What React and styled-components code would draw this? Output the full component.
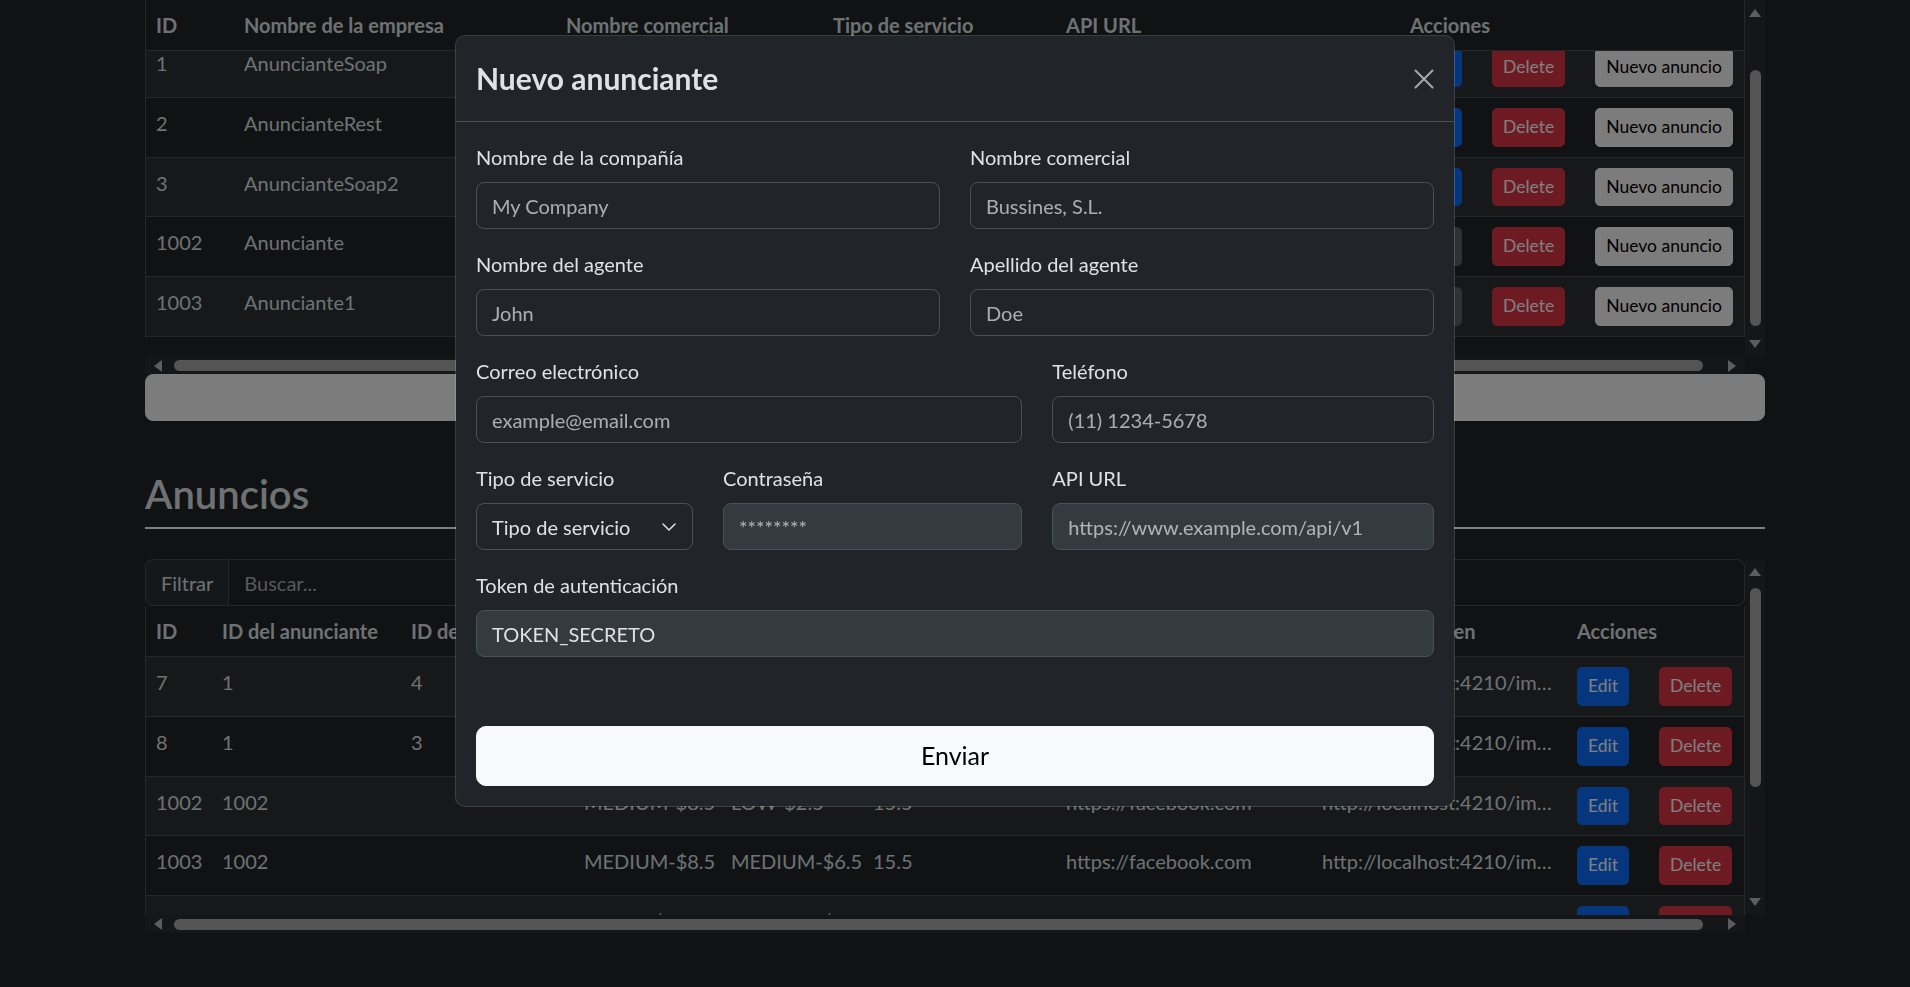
import React, { useLayoutEffect, useRef } from 'react';
import styled, { createGlobalStyle } from 'styled-components';

const GlobalStyle = createGlobalStyle`
  * { box-sizing: border-box; }
  html, body {
    margin: 0;
    padding: 0;
    height: 100%;
    overflow: hidden;
    background: #212529;
  }
  body {
    font-family: Lato, "Open Sans", sans-serif;
    font-size: 20px;
    line-height: 1.5;
    color: #dee2e6;
  }
`;

const Page = styled.div`
  padding: 0 145px;
`;

/* ---------- scroll panels ---------- */

const Panel = styled.div`
  display: grid;
  grid-template-columns: 1fr 20px;
  grid-template-rows: ${p => p.$height}px ${p => p.$bar}px;
`;

const Viewport = styled.div`
  overflow: hidden;
`;

const VScroll = styled.div`
  display: flex;
  flex-direction: column;
  background: #2b2d31;
`;

const HScroll = styled.div`
  display: flex;
  background: #2b2d31;
`;

const ScrollButton = styled.div`
  flex: 0 0 26px;
  display: flex;
  align-items: center;
  justify-content: center;
`;

const Arrow = styled.span`
  width: 0;
  height: 0;
  ${p => p.$dir === 'up' && 'border-left: 6px solid transparent; border-right: 6px solid transparent; border-bottom: 8px solid #bababa;'}
  ${p => p.$dir === 'down' && 'border-left: 6px solid transparent; border-right: 6px solid transparent; border-top: 8px solid #bababa;'}
  ${p => p.$dir === 'left' && 'border-top: 6px solid transparent; border-bottom: 6px solid transparent; border-right: 8px solid #bababa;'}
  ${p => p.$dir === 'right' && 'border-top: 6px solid transparent; border-bottom: 6px solid transparent; border-left: 8px solid #bababa;'}
`;

const VTrack = styled.div`
  flex: 1;
  display: flex;
  flex-direction: column;
  align-items: center;
`;

const VThumb = styled.div`
  width: 11px;
  height: ${p => p.$size}px;
  margin-top: ${p => p.$offset}px;
  border-radius: 6px;
  background: #a8a8a8;
`;

const HTrack = styled.div`
  flex: 1;
  display: flex;
  align-items: center;
`;

const HThumb = styled.div`
  height: 11px;
  width: ${p => p.$size}px;
  margin-left: ${p => p.$offset}px;
  border-radius: 6px;
  background: #a8a8a8;
`;

function VerticalBar({ offset, size }) {
  return (
    <VScroll>
      <ScrollButton><Arrow $dir="up" /></ScrollButton>
      <VTrack><VThumb $offset={offset} $size={size} /></VTrack>
      <ScrollButton><Arrow $dir="down" /></ScrollButton>
    </VScroll>
  );
}

function HorizontalBar({ offset, size }) {
  return (
    <HScroll>
      <ScrollButton><Arrow $dir="left" /></ScrollButton>
      <HTrack><HThumb $offset={offset} $size={size} /></HTrack>
      <ScrollButton><Arrow $dir="right" /></ScrollButton>
    </HScroll>
  );
}

/* ---------- tables ---------- */

const Table = styled.table`
  width: 1600px;
  table-layout: fixed;
  border-collapse: separate;
  border-spacing: 0;
  border-left: 1px solid #495057;
  border-right: 1px solid #495057;
  margin-bottom: ${p => p.$gap || 0}px;
`;

const Th = styled.th`
  position: sticky;
  top: 0;
  z-index: 1;
  background: #212529;
  text-align: left;
  font-weight: 700;
  padding: 10px;
  line-height: 30px;
  border-bottom: 1px solid #495057;
  white-space: nowrap;
  overflow: hidden;
  color: #dee2e6;
`;

const Row = styled.tr`
  &:nth-child(odd) td {
    background: #2c3034;
  }
`;

const Td = styled.td`
  padding: 10px;
  line-height: 30px;
  vertical-align: top;
  border-bottom: 1px solid #495057;
  background: #212529;
  white-space: nowrap;
  overflow: hidden;
  text-overflow: ${p => (p.$ellipsis ? 'ellipsis' : 'clip')};
`;

const Actions = styled.div`
  display: flex;
  gap: 30px;
`;

const variants = {
  primary: { bg: '#0d6efd', fg: '#ffffff' },
  danger: { bg: '#dc3545', fg: '#ffffff' },
  light: { bg: '#f8f9fa', fg: '#000000' },
  secondary: { bg: '#5c636a', fg: '#ffffff' },
};

const SmallButton = styled.button`
  font-family: inherit;
  font-size: 17.5px;
  line-height: 26.75px;
  padding: 5px 10px;
  border-radius: 5px;
  border: 1px solid ${p => variants[p.$variant].bg};
  background: ${p => variants[p.$variant].bg};
  color: ${p => variants[p.$variant].fg};
  white-space: nowrap;
`;

const WideButton = styled.button`
  display: block;
  width: 100%;
  height: 47px;
  font-family: inherit;
  font-size: 20px;
  line-height: 30px;
  border-radius: 8px;
  border: 1px solid #f8f9fa;
  background: #f8f9fa;
  color: #000;
`;

const SectionTitle = styled.h2`
  margin: 49px 0 30px;
  font-size: 40px;
  line-height: 48px;
  font-weight: 600;
  padding-bottom: 9px;
  border-bottom: 2px solid #ffffff;
  color: #dee2e6;
`;

const FilterGroup = styled.div`
  display: flex;
  height: 47px;
  width: 1600px;
`;

const FilterAddon = styled.span`
  padding: 7.5px 15px;
  line-height: 30px;
  background: #2b3035;
  border: 1px solid #495057;
  border-radius: 8px 0 0 8px;
`;

const FilterInput = styled.input`
  flex: 1;
  font-family: inherit;
  font-size: 20px;
  line-height: 30px;
  padding: 7.5px 15px;
  color: #dee2e6;
  background: #212529;
  border: 1px solid #495057;
  border-left: 0;
  border-radius: 0 8px 8px 0;
  outline: none;
  &::placeholder { color: rgba(222, 226, 230, 0.75); }
`;

/* ---------- modal ---------- */

const Backdrop = styled.div`
  position: fixed;
  inset: 0;
  background: rgba(0, 0, 0, 0.5);
  z-index: 10;
`;

const ModalLayer = styled.div`
  position: fixed;
  inset: 0;
  z-index: 11;
  display: flex;
  justify-content: center;
  align-items: flex-start;
  padding-top: 35px;
`;

const ModalContent = styled.div`
  width: 1000px;
  background: #212529;
  border: 1px solid rgba(255, 255, 255, 0.175);
  border-radius: 10px;
  background-clip: padding-box;
`;

const ModalHeader = styled.div`
  display: flex;
  align-items: center;
  justify-content: space-between;
  padding: 20px;
  border-bottom: 1px solid #495057;
`;

const ModalTitle = styled.h4`
  margin: 0;
  font-size: 30px;
  line-height: 45px;
  font-weight: 700;
  color: #dee2e6;
`;

const CloseButton = styled.button`
  display: flex;
  padding: 0;
  border: 0;
  background: none;
  color: #a6a8aa;
`;

const ModalBody = styled.div`
  padding: 20px;
`;

const FormGrid = styled.div`
  display: grid;
  grid-template-columns: repeat(12, 1fr);
  column-gap: 30px;
  row-gap: 20px;
`;

const Field = styled.div`
  grid-column: span ${p => p.$span};
  min-width: 0;
`;

const Label = styled.label`
  display: block;
  margin-bottom: 10px;
  line-height: 30px;
  color: #dee2e6;
`;

const Input = styled.input`
  display: block;
  width: 100%;
  height: 47px;
  padding: 0 15px;
  font-family: inherit;
  font-size: 20px;
  color: #dee2e6;
  background: ${p => (p.disabled ? '#343a40' : '#212529')};
  border: 1px solid #495057;
  border-radius: 8px;
  outline: none;
  &::placeholder { color: rgba(222, 226, 230, 0.72); }
`;

const SelectBox = styled.div`
  display: flex;
  align-items: center;
  justify-content: space-between;
  height: 47px;
  padding: 0 15px;
  background: #212529;
  border: 1px solid #495057;
  border-radius: 8px;
  color: #dee2e6;
`;

const SubmitButton = styled.button`
  display: block;
  width: 100%;
  margin-top: 69px;
  padding: 10px 20px;
  font-family: inherit;
  font-size: 25px;
  line-height: 37.5px;
  color: #000;
  background: #f8f9fa;
  border: 1px solid #f8f9fa;
  border-radius: 10px;
`;

/* ---------- data ---------- */

const advertisers = [
  { id: 1, company: 'AnuncianteSoap', trade: 'Soap Media S.A.', service: 'SOAP', api: 'http://localhost:8081/ws', edit: 'primary' },
  { id: 2, company: 'AnuncianteRest', trade: 'Rest Media S.L.', service: 'REST', api: 'http://localhost:8082/api', edit: 'primary' },
  { id: 3, company: 'AnuncianteSoap2', trade: 'Soap Media 2', service: 'SOAP', api: 'http://localhost:8083/ws', edit: 'primary' },
  { id: 1002, company: 'Anunciante', trade: 'Anunciante', service: 'EXTERNO', api: '', edit: 'secondary' },
  { id: 1003, company: 'Anunciante1', trade: 'Anunciante1', service: 'EXTERNO', api: '', edit: 'secondary' },
];

const advertiserCols = [88, 322, 267, 233, 344, 344];

const ads = [
  { id: 7, adv: 1, site: 4, size: 'SMALL-$4.5', prio: 'LOW-$2.5', weight: '15.5', url: 'https://facebook.com' },
  { id: 8, adv: 1, site: 3, size: 'SMALL-$4.5', prio: 'LOW-$2.5', weight: '15.5', url: 'https://facebook.com' },
  { id: 1002, adv: 1002, site: '', size: 'MEDIUM-$8.5', prio: 'LOW-$2.5', weight: '15.5', url: 'https://facebook.com' },
  { id: 1003, adv: 1002, site: '', size: 'MEDIUM-$8.5', prio: 'MEDIUM-$6.5', weight: '15.5', url: 'https://facebook.com' },
  { id: 9, adv: 1, site: 4, size: 'LARGE-$12.0', prio: 'MEDIUM-$6.5', weight: '15.5', url: 'https://facebook.com' },
];

const adCols = [66, 189, 173, 147, 142, 193, 256, 255, 177];

function ColGroup({ widths }) {
  return (
    <colgroup>
      {widths.map((w, i) => <col key={i} style={{ width: w }} />)}
    </colgroup>
  );
}

function CloseIcon() {
  return (
    <svg width="20" height="20" viewBox="0 0 16 16" fill="none" stroke="currentColor" strokeWidth="1.6" strokeLinecap="round">
      <path d="M1.2 1.2 14.8 14.8M14.8 1.2 1.2 14.8" />
    </svg>
  );
}

function ChevronIcon() {
  return (
    <svg width="16" height="16" viewBox="0 0 16 16" fill="none" stroke="#dee2e6" strokeWidth="1.5" strokeLinecap="round" strokeLinejoin="round">
      <path d="m2 5 6 6 6-6" />
    </svg>
  );
}

export default function App() {
  const advertiserView = useRef(null);

  useLayoutEffect(() => {
    const el = advertiserView.current;
    if (el) el.scrollTop = el.scrollHeight;
  }, []);

  return (
    <>
      <GlobalStyle />
      <Page>
        <Panel $height={357} $bar={17}>
          <Viewport ref={advertiserView}>
            <Table $gap={20}>
              <ColGroup widths={advertiserCols} />
              <thead>
                <tr>
                  <Th>ID</Th>
                  <Th>Nombre de la empresa</Th>
                  <Th>Nombre comercial</Th>
                  <Th>Tipo de servicio</Th>
                  <Th>API URL</Th>
                  <Th>Acciones</Th>
                </tr>
              </thead>
              <tbody>
                {advertisers.map(a => (
                  <Row key={a.id}>
                    <Td>{a.id}</Td>
                    <Td>{a.company}</Td>
                    <Td>{a.trade}</Td>
                    <Td>{a.service}</Td>
                    <Td>{a.api}</Td>
                    <Td>
                      <Actions>
                        <SmallButton $variant={a.edit}>Edit</SmallButton>
                        <SmallButton $variant="danger">Delete</SmallButton>
                        <SmallButton $variant="light">Nuevo anuncio</SmallButton>
                      </Actions>
                    </Td>
                  </Row>
                ))}
              </tbody>
            </Table>
          </Viewport>
          <VerticalBar offset={44} size={256} />
          <HorizontalBar offset={3} size={1529} />
        </Panel>

        <WideButton>Nuevo anunciante</WideButton>

        <SectionTitle>Anuncios</SectionTitle>

        <Panel $height={356} $bar={18}>
          <Viewport>
            <FilterGroup>
              <FilterAddon>Filtrar</FilterAddon>
              <FilterInput placeholder="Buscar..." />
            </FilterGroup>
            <Table>
              <ColGroup widths={adCols} />
              <thead>
                <tr>
                  <Th>ID</Th>
                  <Th>ID del anunciante</Th>
                  <Th>ID del sitio</Th>
                  <Th>Tamaño</Th>
                  <Th>Prioridad</Th>
                  <Th>Peso</Th>
                  <Th>URL de destino</Th>
                  <Th>URL de la imagen</Th>
                  <Th>Acciones</Th>
                </tr>
              </thead>
              <tbody>
                {ads.map(ad => (
                  <Row key={ad.id}>
                    <Td>{ad.id}</Td>
                    <Td>{ad.adv}</Td>
                    <Td>{ad.site}</Td>
                    <Td>{ad.size}</Td>
                    <Td>{ad.prio}</Td>
                    <Td>{ad.weight}</Td>
                    <Td>{ad.url}</Td>
                    <Td $ellipsis>{`http://localhost:4210/images/anuncio-${ad.id}.png`}</Td>
                    <Td>
                      <Actions>
                        <SmallButton $variant="primary">Edit</SmallButton>
                        <SmallButton $variant="danger">Delete</SmallButton>
                      </Actions>
                    </Td>
                  </Row>
                ))}
              </tbody>
            </Table>
          </Viewport>
          <VerticalBar offset={3} size={199} />
          <HorizontalBar offset={3} size={1529} />
        </Panel>
      </Page>

      <Backdrop />
      <ModalLayer>
        <ModalContent>
          <ModalHeader>
            <ModalTitle>Nuevo anunciante</ModalTitle>
            <CloseButton aria-label="Cerrar"><CloseIcon /></CloseButton>
          </ModalHeader>
          <ModalBody>
            <FormGrid>
              <Field $span={6}>
                <Label>Nombre de la compañía</Label>
                <Input placeholder="My Company" />
              </Field>
              <Field $span={6}>
                <Label>Nombre comercial</Label>
                <Input placeholder="Bussines, S.L." />
              </Field>
              <Field $span={6}>
                <Label>Nombre del agente</Label>
                <Input placeholder="John" />
              </Field>
              <Field $span={6}>
                <Label>Apellido del agente</Label>
                <Input placeholder="Doe" />
              </Field>
              <Field $span={7}>
                <Label>Correo electrónico</Label>
                <Input placeholder="example@email.com" />
              </Field>
              <Field $span={5}>
                <Label>Teléfono</Label>
                <Input placeholder="(11) 1234-5678" />
              </Field>
              <Field $span={3}>
                <Label>Tipo de servicio</Label>
                <SelectBox>
                  <span>Tipo de servicio</span>
                  <ChevronIcon />
                </SelectBox>
              </Field>
              <Field $span={4}>
                <Label>Contraseña</Label>
                <Input disabled placeholder="********" />
              </Field>
              <Field $span={5}>
                <Label>API URL</Label>
                <Input disabled placeholder="https://www.example.com/api/v1" />
              </Field>
              <Field $span={12}>
                <Label>Token de autenticación</Label>
                <Input disabled defaultValue="TOKEN_SECRETO" />
              </Field>
            </FormGrid>
            <SubmitButton>Enviar</SubmitButton>
          </ModalBody>
        </ModalContent>
      </ModalLayer>
    </>
  );
}
